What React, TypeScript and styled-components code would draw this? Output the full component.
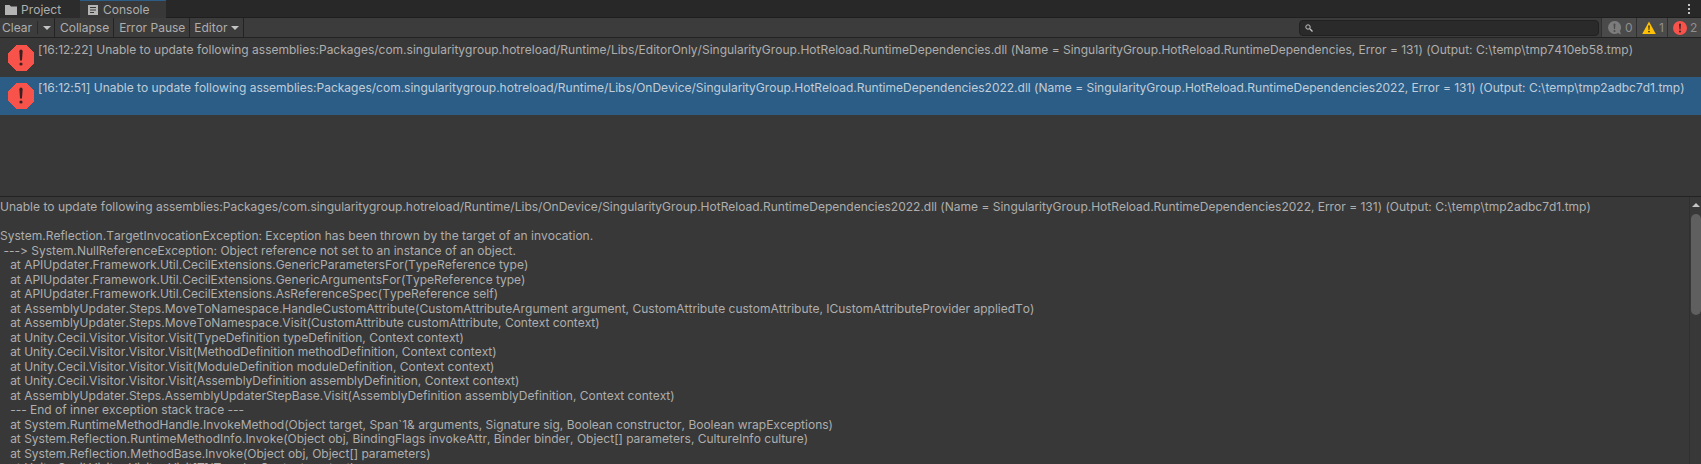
import React from 'react';
import styled, { createGlobalStyle } from 'styled-components';

const GlobalStyle = createGlobalStyle`
  html, body {
    margin: 0;
    padding: 0;
    background: #383838;
    overflow: hidden;
  }
`;

const Window = styled.div`
  width: 1701px;
  height: 464px;
  display: flex;
  flex-direction: column;
  overflow: hidden;
  background: #383838;
  color: #aeaeae;
  font-family: Inter, "Liberation Sans", sans-serif;
  font-size: 12px;
  font-kerning: none;
  font-variant-ligatures: none;
  font-feature-settings: "calt" 0, "liga" 0;
`;

const TabBar = styled.div`
  height: 18px;
  flex: none;
  box-sizing: border-box;
  display: flex;
  align-items: stretch;
  background: #282828;
  border-bottom: 1px solid #1f1f1f;
`;

const Tab = styled.div<{ $active?: boolean }>`
  width: ${(p) => (p.$active ? '86px' : '80px')};
  height: 18px;
  display: flex;
  align-items: center;
  gap: ${(p) => (p.$active ? '5px' : '4px')};
  padding-left: ${(p) => (p.$active ? '8px' : '5px')};
  box-sizing: border-box;
  background: ${(p) => (p.$active ? '#383838' : '#2c2c2c')};
  border-top: 1px solid ${(p) => (p.$active ? '#2c5d87' : 'transparent')};
  color: #aeaeae;
`;

const MoreDots = styled.div`
  margin-left: auto;
  margin-right: 11px;
  display: flex;
  flex-direction: column;
  justify-content: center;
  gap: 2px;
  i {
    width: 2px;
    height: 2px;
    background: #c4c4c4;
  }
`;

const Toolbar = styled.div`
  height: 20px;
  flex: none;
  box-sizing: border-box;
  display: flex;
  align-items: stretch;
  background: #3c3c3c;
  border-bottom: 1px solid #232323;
`;

const ToolButton = styled.div<{ $left: number; $right: number }>`
  display: flex;
  align-items: center;
  gap: 4px;
  padding: 0 ${(p) => p.$right}px 0 ${(p) => p.$left}px;
  border-right: 1px solid #232323;
`;

const ButtonDivider = styled.span`
  width: 1px;
  height: 13px;
  margin: 0 1px;
  background: #2a2a2a;
`;

const Caret = styled.span`
  width: 0;
  height: 0;
  border-left: 4px solid transparent;
  border-right: 4px solid transparent;
  border-top: 4px solid #c4c4c4;
`;

const SearchField = styled.div`
  margin: 2px 2px 1px auto;
  width: 300px;
  display: flex;
  align-items: center;
  padding-left: 5px;
  box-sizing: border-box;
  background: #2a2a2a;
  border: 1px solid #212121;
  border-radius: 4px;
`;

const Counter = styled.div<{ $width: number; $left: number }>`
  width: ${(p) => p.$width}px;
  display: flex;
  align-items: center;
  gap: 3px;
  padding-left: ${(p) => p.$left}px;
  box-sizing: border-box;
  background: #4a4a4a;
  border-left: 1px solid #303030;
  color: #8f8f8f;
`;

const LogList = styled.div`
  height: 158px;
  flex: none;
  background: #383838;
  border-bottom: 1px solid #232323;
`;

const LogRow = styled.div<{ $selected?: boolean }>`
  height: ${(p) => (p.$selected ? '38px' : '39px')};
  display: flex;
  align-items: flex-start;
  background: ${(p) => (p.$selected ? '#2c5d87' : '#383838')};
  color: ${(p) => (p.$selected ? '#c0cdd8' : '#aeaeae')};
`;

const LogIcon = styled.div<{ $top: number }>`
  width: 38px;
  flex: none;
  padding: ${(p) => p.$top}px 0 0 8px;
  box-sizing: border-box;
  line-height: 0;
`;

const LogText = styled.div<{ $top: number }>`
  padding-top: ${(p) => p.$top}px;
  white-space: nowrap;
  line-height: 15px;
`;

const Details = styled.div`
  flex: 1;
  min-height: 0;
  display: flex;
  overflow: hidden;
`;

const StackText = styled.pre`
  flex: 1;
  margin: 0;
  padding-top: 3px;
  font: inherit;
  line-height: 14.5px;
  white-space: pre;
  overflow: hidden;
`;

const ScrollTrack = styled.div`
  width: 12px;
  flex: none;
  padding: 6px 0 0 1px;
  border-left: 1px solid #303030;
  box-sizing: border-box;
  display: flex;
  flex-direction: column;
  align-items: center;
  gap: 7px;
`;

const ScrollArrow = styled.span`
  width: 0;
  height: 0;
  border-left: 4px solid transparent;
  border-right: 4px solid transparent;
  border-bottom: 4px solid #c4c4c4;
`;

const ScrollThumb = styled.div`
  width: 10px;
  height: 101px;
  border-radius: 5px;
  background: #5f5f5f;
`;

const ErrorIcon = () => (
  <svg width="26" height="26" viewBox="0 0 26 26" shapeRendering="crispEdges">
    <polygon points="8,0 18,0 26,8 26,18 18,26 8,26 0,18 0,8" fill="#f8534a" />
    <path d="M11.4 6.2a1.6 1.6 0 0 1 3.2 0L14 15.6h-2z" fill="#3a2020" shapeRendering="auto" />
    <circle cx="13" cy="19" r="1.6" fill="#3a2020" shapeRendering="auto" />
  </svg>
);

const stackTrace = `Unable to update following assemblies:Packages/com.singularitygroup.hotreload/Runtime/Libs/OnDevice/SingularityGroup.HotReload.RuntimeDependencies2022.dll (Name = SingularityGroup.HotReload.RuntimeDependencies2022, Error = 131) (Output: C:\\temp\\tmp2adbc7d1.tmp)

System.Reflection.TargetInvocationException: Exception has been thrown by the target of an invocation.
 ---> System.NullReferenceException: Object reference not set to an instance of an object.
   at APIUpdater.Framework.Util.CecilExtensions.GenericParametersFor(TypeReference type)
   at APIUpdater.Framework.Util.CecilExtensions.GenericArgumentsFor(TypeReference type)
   at APIUpdater.Framework.Util.CecilExtensions.AsReferenceSpec(TypeReference self)
   at AssemblyUpdater.Steps.MoveToNamespace.HandleCustomAttribute(CustomAttributeArgument argument, CustomAttribute customAttribute, ICustomAttributeProvider appliedTo)
   at AssemblyUpdater.Steps.MoveToNamespace.Visit(CustomAttribute customAttribute, Context context)
   at Unity.Cecil.Visitor.Visitor.Visit(TypeDefinition typeDefinition, Context context)
   at Unity.Cecil.Visitor.Visitor.Visit(MethodDefinition methodDefinition, Context context)
   at Unity.Cecil.Visitor.Visitor.Visit(ModuleDefinition moduleDefinition, Context context)
   at Unity.Cecil.Visitor.Visitor.Visit(AssemblyDefinition assemblyDefinition, Context context)
   at AssemblyUpdater.Steps.AssemblyUpdaterStepBase.Visit(AssemblyDefinition assemblyDefinition, Context context)
   --- End of inner exception stack trace ---
   at System.RuntimeMethodHandle.InvokeMethod(Object target, Span\`1& arguments, Signature sig, Boolean constructor, Boolean wrapExceptions)
   at System.Reflection.RuntimeMethodInfo.Invoke(Object obj, BindingFlags invokeAttr, Binder binder, Object[] parameters, CultureInfo culture)
   at System.Reflection.MethodBase.Invoke(Object obj, Object[] parameters)
   at Unity.Cecil.Visitor.Visitor.Visit[T](T node, Context context)`;

export default function App() {
  return (
    <>
      <GlobalStyle />
      <Window>
        <TabBar>
          <Tab>
            <svg width="12" height="10" viewBox="0 0 12 10">
              <path d="M0 0h4.5l1.5 1.5h6V10H0z" fill="#b4b4b4" />
            </svg>
            Project
          </Tab>
          <Tab $active>
            <svg width="10" height="10" viewBox="0 0 10 10">
              <path d="M0 0h10v10H0z" fill="#b4b4b4" />
              <path d="M2 2.5h6M2 5h6M2 7.5h4" stroke="#383838" />
            </svg>
            Console
          </Tab>
          <MoreDots>
            <i />
            <i />
            <i />
          </MoreDots>
        </TabBar>
        <Toolbar>
          <ToolButton $left={2} $right={3}>
            Clear
            <ButtonDivider />
            <Caret />
          </ToolButton>
          <ToolButton $left={5} $right={4}>Collapse</ToolButton>
          <ToolButton $left={5} $right={4}>Error Pause</ToolButton>
          <ToolButton $left={4} $right={4}>
            Editor
            <Caret />
          </ToolButton>
          <SearchField>
            <svg width="8" height="8" viewBox="0 0 8 8">
              <circle cx="3" cy="3" r="2.2" fill="none" stroke="#c4c4c4" />
              <path d="M4.8 4.8L7.5 7.5" stroke="#c4c4c4" strokeWidth="1.3" />
            </svg>
          </SearchField>
          <Counter $width={35} $left={6}>
            <svg width="14" height="14" viewBox="0 0 14 14">
              <path d="M6.5 0a6.5 6.5 0 1 0 0 13c1.3 0 2.5-.4 3.5-1l3 1.500-1-3.500A6.500 6.500 0 0 0 6.500 0z" fill="#7c7c7c" />
              <path d="M5.600 3.500a.9.9 0 0 1 1.800 0L7 8H6z" fill="#4a4a4a" />
              <circle cx="6.500" cy="10" r="1" fill="#4a4a4a" />
            </svg>
            0
          </Counter>
          <Counter $width={31} $left={5}>
            <svg width="14" height="13" viewBox="0 0 14 13">
              <path d="M7 .5l6.800 12.500H.2z" fill="#ffc107" />
              <path d="M6.200 4.500h1.600L7.400 9h-.8z" fill="#3a3000" />
              <circle cx="7" cy="10.600" r=".9" fill="#3a3000" />
            </svg>
            1
          </Counter>
          <Counter $width={34} $left={5}>
            <svg width="14" height="14" viewBox="0 0 14 14">
              <circle cx="7" cy="7" r="7" fill="#f8534a" />
              <path d="M6.100 3.500a.9.9 0 0 1 1.800 0L7.500 8.500h-1z" fill="#3a2020" />
              <circle cx="7" cy="10.500" r="1" fill="#3a2020" />
            </svg>
            2
          </Counter>
        </Toolbar>
        <LogList>
          <LogRow>
            <LogIcon $top={7}>
              <ErrorIcon />
            </LogIcon>
            <LogText $top={4}>
              [16:12:22] Unable to update following assemblies:Packages/com.singularitygroup.hotreload/Runtime/Libs/EditorOnly/SingularityGroup.HotReload.RuntimeDependencies.dll (Name = SingularityGroup.HotReload.RuntimeDependencies, Error = 131) (Output: C:\temp\tmp7410eb58.tmp)
            </LogText>
          </LogRow>
          <LogRow $selected>
            <LogIcon $top={6}>
              <ErrorIcon />
            </LogIcon>
            <LogText $top={3}>
              [16:12:51] Unable to update following assemblies:Packages/com.singularitygroup.hotreload/Runtime/Libs/OnDevice/SingularityGroup.HotReload.RuntimeDependencies2022.dll (Name = SingularityGroup.HotReload.RuntimeDependencies2022, Error = 131) (Output: C:\temp\tmp2adbc7d1.tmp)
            </LogText>
          </LogRow>
        </LogList>
        <Details>
          <StackText>{stackTrace}</StackText>
          <ScrollTrack>
            <ScrollArrow />
            <ScrollThumb />
          </ScrollTrack>
        </Details>
      </Window>
    </>
  );
}
